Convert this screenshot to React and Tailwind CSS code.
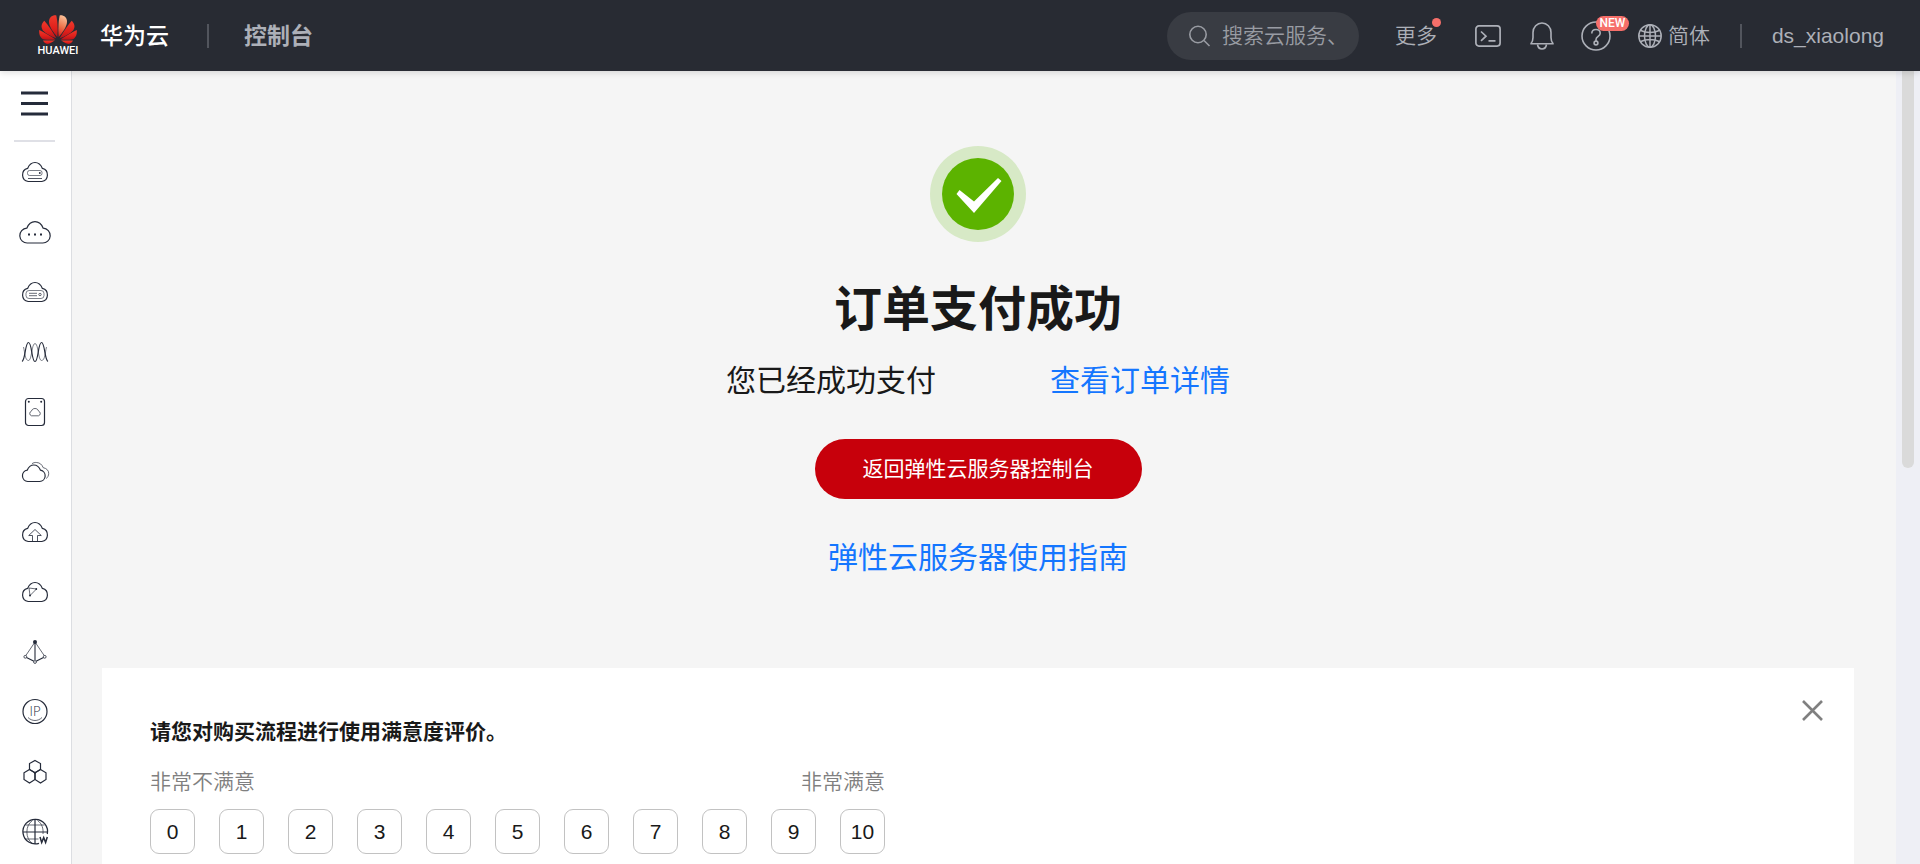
import { useState } from "react";

const CLOUD =
  "M9.2 25.5H22.8A6.7 6.7 0 0 0 23.4 12.4C21.8 8.6 19.2 6.5 16 6.5S10.2 8.6 8.6 12.4A6.7 6.7 0 0 0 9.2 25.5Z";

const services = [
  {
    name: "弹性云服务器",
    icon: (
      <>
        <path d={CLOUD} />
        <rect x="8.5" y="14.5" width="14.5" height="5" rx="2" strokeWidth="0.6" />
        <path d="M9 22.5H23" strokeWidth="0.8" />
        <circle cx="20.8" cy="17" r="0.9" fill="currentColor" stroke="none" />
      </>
    ),
  },
  {
    name: "云耀云服务器",
    icon: (
      <>
        <path d="M8.6 27H23.4A7.4 7.4 0 0 0 24.2 12.2C22.5 8 19.6 5.7 16 5.7S9.5 8 7.8 12.2A7.4 7.4 0 0 0 8.6 27Z" />
        <g fill="currentColor" stroke="none">
          <rect x="9" y="17.500" width="2" height="2" />
          <rect x="15" y="17.500" width="2" height="2" />
          <rect x="21" y="17.500" width="2" height="2" />
        </g>
      </>
    ),
  },
  {
    name: "裸金属服务器",
    icon: (
      <>
        <path d={CLOUD} />
        <rect x="7" y="14.5" width="18" height="8" rx="3" strokeWidth="0.6" />
        <path d="M10 17.3H18M10 19.7H18" strokeWidth="0.7" />
        <circle cx="21" cy="18.5" r="1.2" strokeWidth="0.7" />
      </>
    ),
  },
  {
    name: "弹性伸缩",
    icon: (
      <>
        <path d="M3 25.5C6.5 24 6 6.5 9.5 6.5S12.5 25.5 16 25.5S19 6.5 22.5 6.5S25.5 24 29 25.5" />
        <path
          d="M4.5 11C6 17 6 24.5 9.5 24.5S12.5 7.5 16 7.5S19 24.5 22.5 24.5S26 17 27.5 11"
          strokeWidth="0.6"
        />
      </>
    ),
  },
  {
    name: "云硬盘",
    icon: (
      <>
        <rect x="6.5" y="2.5" width="19" height="27" rx="3" />
        <path
          d="M12.5 19.8H19.500A2.4 2.4 0 0 0 19.6 15.2C19 13.3 17.7 12.5 16 12.5S13 13.3 12.4 15.2A2.4 2.4 0 0 0 12.5 19.8Z"
          strokeWidth="0.7"
        />
        <g fill="currentColor" stroke="none">
          <circle cx="9.8" cy="5.8" r="1" />
          <circle cx="22.2" cy="5.8" r="1" />
        </g>
      </>
    ),
  },
  {
    name: "云备份",
    icon: (
      <>
        <path d="M8.7 25.5H20.7A5.7 5.7 0 0 0 21.5 14.2C20.2 10.9 17.9 9 14.8 9S9.5 10.9 8.2 14.2A5.7 5.7 0 0 0 8.7 25.5Z" />
        <path
          d="M13 7.7C14.3 6.8 15.8 6.3 17.6 6.5C20.8 6.7 23 8.5 24.2 11.7C27.7 12.3 29.7 14.6 29.7 17.3C29.7 19.6 28.7 21.6 27.2 22.5"
          strokeWidth="0.7"
        />
      </>
    ),
  },
  {
    name: "对象存储服务",
    icon: (
      <>
        <path d={CLOUD} />
        <path d="M13.5 25V19.5H9.7L16 13.5L22.3 19.5H18.5V25" strokeWidth="0.8" />
      </>
    ),
  },
  {
    name: "弹性文件服务",
    icon: (
      <>
        <path d={CLOUD} />
        <path d="M10 12L17.5 13L11 19.500Z" strokeWidth="0.7" />
        <g fill="currentColor" stroke="none">
          <circle cx="11" cy="19.5" r="1" />
          <circle cx="17.3" cy="13" r="0.9" />
        </g>
      </>
    ),
  },
  {
    name: "弹性负载均衡",
    icon: (
      <>
        <path d="M16 6L6.5 20M16 6L25.5 20" strokeWidth="0.7" />
        <path d="M16 6V24" strokeWidth="1.1" />
        <path d="M7.5 21.5L15 25.2M24.5 21.5L17 25.2" />
        <circle cx="16" cy="6" r="2" fill="currentColor" stroke="none" />
        <g fill="white" strokeWidth="0.8">
          <circle cx="6.3" cy="20.8" r="1.4" />
          <circle cx="25.7" cy="20.8" r="1.4" />
          <circle cx="16" cy="26" r="1.4" />
        </g>
      </>
    ),
  },
  {
    name: "弹性公网",
    icon: (
      <>
        <circle cx="16" cy="15.5" r="12" />
        <path d="M9 21.5C13 25.5 19 25.5 23 21.5" strokeWidth="0.7" />
        <text
          x="16"
          y="19.500"
          textAnchor="middle"
          fontSize="13"
          fill="currentColor"
          stroke="none"
          className="font-['Lato'] font-light"
        >
          IP
        </text>
      </>
    ),
  },
  {
    name: "区块链",
    icon: (
      <>
        <path d="M16 4.5L21.5 7.5V13.5L16 16.8L10.5 13.5V7.5Z" />
        <path d="M10.5 13.5L16 16.8V23.5L10.5 27L5 23.5V16.8Z" />
        <path d="M21.5 13.500L27 16.8V23.5L21.5 27L16 23.5V16.8Z" />
        <circle cx="16" cy="16.8" r="1.1" fill="currentColor" stroke="none" />
      </>
    ),
  },
  {
    name: "域名注册",
    icon: (
      <>
        <path d="M20 27.3A12.3 12.3 0 1 1 28.3 18" strokeWidth="1.3" />
        <path d="M4 16H28M16 4V28" />
        <path
          d="M6.5 9H25.5M6.5 23H19.5M13.5 27.5C6 23 6 9 13.5 4.5M18.5 4.5C23 7.5 24.5 12.5 24 18"
          strokeWidth="0.7"
        />
        <path d="M21 21L22.700 26.500L24.700 21.500L26.600 26.500L28.300 21" strokeWidth="1.5" />
      </>
    ),
  },
];

function HuaweiLogo() {
  return (
    <a href="#" className="flex w-[38px] flex-col items-center" aria-label="HUAWEI">
      <svg viewBox="0 0 38 30" className="h-[30px] w-[38px]" aria-hidden="true">
        <defs>
          <linearGradient id="petal" x1="0" y1="0" x2="0" y2="1">
            <stop offset="0" stopColor="#ee3a2c" />
            <stop offset="0.6" stopColor="#e0201b" />
            <stop offset="1" stopColor="#b8141a" />
          </linearGradient>
          <linearGradient id="shine" x1="0.5" y1="0" x2="0.3" y2="1">
            <stop offset="0" stopColor="#fbc29a" />
            <stop offset="0.5" stopColor="#f0794f" />
            <stop offset="1" stopColor="#de201b" />
          </linearGradient>
        </defs>
        <g fill="url(#petal)">
          <path d="M18.3 22C19 15 18.500 5 17.200 0.300C13 0 9.800 2.500 10 7C10.300 12 14.500 17.500 18.300 22Z" />
          <path d="M17.300 23.300C13.500 16.500 9 10 5.300 5.800C2 9 1.800 12.500 4 15.500C6.500 18.500 12 21.500 17.300 23.300Z" />
          <path d="M20.700 23.300C24.500 16.500 29 10 32.700 5.800C36 9 36.200 12.500 34 15.500C31.500 18.500 26 21.500 20.700 23.300Z" />
          <path d="M16.500 24.500C12 21.500 5 17.500 0.300 15C-0.300 19.500 1.500 23.800 5.500 24.500C9 25 13 24.800 16.500 24.500Z" />
          <path d="M21.500 24.500C26 21.500 33 17.500 37.700 15C38.300 19.500 36.500 23.800 32.500 24.500C29 25 25 24.800 21.500 24.500Z" />
          <path d="M16 25.500H4C5.500 28.800 8.500 29.600 11 28.300C13 27.300 14.800 26.200 16 25.500Z" />
          <path d="M22 25.500H34C32.500 28.800 29.500 29.600 27 28.300C25 27.300 23.200 26.200 22 25.500Z" />
        </g>
        <path
          d="M19.700 22C19 15 19.500 5 20.800 0.300C25 0 28.200 2.500 28 7C27.700 12 23.500 17.500 19.700 22Z"
          fill="url(#shine)"
        />
      </svg>
      <span className="font-['Roboto'] text-[11px] leading-3 font-medium text-white">HUAWEI</span>
    </a>
  );
}

function Divider() {
  return <span className="h-6 w-0.5 bg-[#52555d]" />;
}

function Header() {
  return (
    <header className="relative z-10 flex h-[71px] shrink-0 items-center bg-[#282b33] pr-9 pl-[39px] text-[21px] leading-8 text-[#adb0b8] shadow-[0_2px_6px_rgba(0,0,0,0.12)]">
      <HuaweiLogo />
      <a href="#" className="mr-[38px] ml-[23px] text-[23px] font-medium text-white">
        华为云
      </a>
      <Divider />
      <a href="#" className="ml-[35px] text-[23px] font-bold">
        控制台
      </a>

      <label className="ml-auto flex h-12 w-48 items-center gap-[11px] rounded-full bg-[#393c43] pl-[22px] text-[#999ca3]">
        <svg viewBox="0 0 22 22" className="size-[22px] shrink-0" fill="none" stroke="currentColor" strokeWidth="1.6">
          <circle cx="9" cy="9.5" r="8.2" />
          <path d="M15 15.5L20.5 21" />
        </svg>
        <input
          type="text"
          aria-label="搜索"
          placeholder="搜索云服务、"
          className="w-[128px] bg-transparent font-[350] outline-none placeholder:text-[#999ca3]"
        />
      </label>

      <button type="button" className="relative ml-9 font-[350]">
        更多
        <span className="absolute -top-0.5 -right-1 size-[9px] rounded-full bg-[#f66f6a]" />
      </button>

      <button type="button" aria-label="CloudShell" className="ml-[38px]">
        <svg viewBox="0 0 26 22" className="h-[22px] w-[26px]" fill="none" stroke="currentColor" strokeWidth="1.7">
          <rect x="0.9" y="0.9" width="24.2" height="20.2" rx="3" />
          <path d="M6 6.5L11 11.2L6 15.8M13.5 15.8H20.5" />
        </svg>
      </button>

      <button type="button" aria-label="消息" className="ml-[29px]">
        <svg viewBox="0 0 24 28" className="h-7 w-6" fill="none" stroke="currentColor" strokeWidth="1.6">
          <path d="M0.3 21.8H23.7M1 21.5C2.7 19.5 3 18 3 15.5V10.5A9 9.5 0 0 1 21 10.5V15.5C21 18 21.3 19.5 23 21.5" />
          <path d="M7.5 22.5C8 25.5 9.5 27 12 27S16 25.5 16.5 22.5" />
        </svg>
      </button>

      <button type="button" aria-label="帮助" className="relative ml-[27px]">
        <svg viewBox="0 0 30 30" className="size-[30px]" fill="none" stroke="currentColor" strokeWidth="1.6">
          <circle cx="15" cy="15" r="14" />
          <path d="M10.8 12.5C10.8 9.8 12.5 8.5 15 8.5S19.2 10 19.2 12.3C19.2 15.3 15 15.5 15 18.5V20" />
          <circle cx="15" cy="22" r="1.9" />
        </svg>
        <span className="absolute -top-[5px] left-[15px] h-[15px] w-[33px] rounded-full bg-[#f66f6a] text-center font-['Roboto'] text-[12px] leading-[15px] font-medium text-white">
          NEW
        </span>
      </button>

      <button type="button" className="ml-[27px] flex items-center gap-1.5 font-[350]">
        <svg viewBox="0 0 24 24" className="size-6" fill="none" stroke="currentColor" strokeWidth="1.5">
          <circle cx="12" cy="12" r="11.2" />
          <ellipse cx="12" cy="12" rx="5.5" ry="11.2" />
          <path d="M12 1V23M1 12H23M2.8 6.5C8 9.2 16 9.2 21.2 6.5M2.8 17.5C8 14.8 16 14.8 21.2 17.5" />
        </svg>
        简体
      </button>
      <span className="mx-[30px] flex">
        <Divider />
      </span>
      <a href="#">ds_xiaolong</a>
    </header>
  );
}

function Sidebar() {
  return (
    <aside className="flex w-[72px] shrink-0 flex-col items-center border-r border-[#dcdee2] bg-white pr-0.5 text-[#252b3a]">
      <button type="button" aria-label="服务列表" className="flex h-[69px] items-start pt-5">
        <svg viewBox="0 0 27 25" className="h-[25px] w-[27px]" fill="currentColor">
          <rect y="0.5" width="27" height="3" />
          <rect y="11" width="27" height="3" />
          <rect y="21.5" width="27" height="3" />
        </svg>
      </button>
      <span className="h-0.5 w-[41px] shrink-0 bg-[#dfe0e6]" />
      <nav>
        {services.map((service) => (
          <a key={service.name} href="#" aria-label={service.name} className="flex h-[60px] w-8 items-center">
            <svg viewBox="0 0 32 32" className="size-8" fill="none" stroke="currentColor" strokeWidth="1.2">
              {service.icon}
            </svg>
          </a>
        ))}
      </nav>
    </aside>
  );
}

function PaymentResult() {
  return (
    <section className="flex flex-col items-center pt-[75px] text-[30px] leading-[45px]">
      <svg viewBox="0 0 96 96" className="size-24" aria-hidden="true">
        <circle cx="48" cy="48" r="48" fill="#d7e9c6" />
        <circle cx="48" cy="48" r="36" fill="#5cb300" />
        <path d="M26.5 48L29.5 44L44 55.5L68 32L71.5 35L44 67Z" fill="white" />
      </svg>
      <h1 className="mt-8 text-5xl leading-[72px] font-bold">订单支付成功</h1>
      <p className="mt-3 flex gap-[114px]">
        您已经成功支付
        <a href="#" className="text-[#1476ff]">
          查看订单详情
        </a>
      </p>
      <button type="button" className="mt-9 h-[60px] rounded-full bg-[#c7000b] px-12 text-[21px] leading-8 text-white">
        返回弹性云服务器控制台
      </button>
      <a href="#" className="mt-9 text-[#1476ff]">
        弹性云服务器使用指南
      </a>
    </section>
  );
}

function Survey() {
  const [score, setScore] = useState(null);

  return (
    <section className="mt-[88px] flex flex-1 items-start justify-between bg-white pt-7 pr-7 pl-12 text-[21px] leading-8">
      <fieldset className="pt-5 pb-12">
        <legend className="float-left font-bold">请您对购买流程进行使用满意度评价。</legend>
        <div className="clear-both flex justify-between pt-[18px] font-[350] text-[#808080]">
          <span>非常不满意</span>
          <span>非常满意</span>
        </div>
        <div className="mt-[11px] flex gap-6">
          {Array.from({ length: 11 }, (_, i) => (
            <label
              key={i}
              className="relative flex size-[45px] cursor-pointer items-center justify-center rounded-[9px] border border-[#c2c2c2] has-checked:border-[#1476ff]"
            >
              <input
                type="radio"
                name="score"
                value={i}
                checked={score === i}
                onChange={() => setScore(i)}
                className="sr-only"
              />
              {i}
            </label>
          ))}
        </div>
      </fieldset>
      <button type="button" aria-label="关闭" className="flex size-7 items-center justify-center text-[#808080]">
        <svg viewBox="0 0 21 21" className="size-[21px]" fill="none" stroke="currentColor" strokeWidth="2.6">
          <path d="M1 1L20 20M20 1L1 20" />
        </svg>
      </button>
    </section>
  );
}

export default function App() {
  return (
    <div className="flex h-screen flex-col overflow-hidden bg-[#f5f5f5] font-['Liberation_Sans','Noto_Sans_CJK_SC',sans-serif] text-[#191919]">
      <Header />
      <div className="flex min-h-0 flex-1">
        <Sidebar />
        <main className="flex min-w-0 flex-1 flex-col overflow-hidden pr-[42px] pl-[30px]">
          <PaymentResult />
          <Survey />
        </main>
        <div className="w-6 shrink-0 bg-[#eeeff5] px-1.5">
          <div className="h-1/2 w-3 rounded-b-full bg-[#dadada]" />
        </div>
      </div>
    </div>
  );
}
